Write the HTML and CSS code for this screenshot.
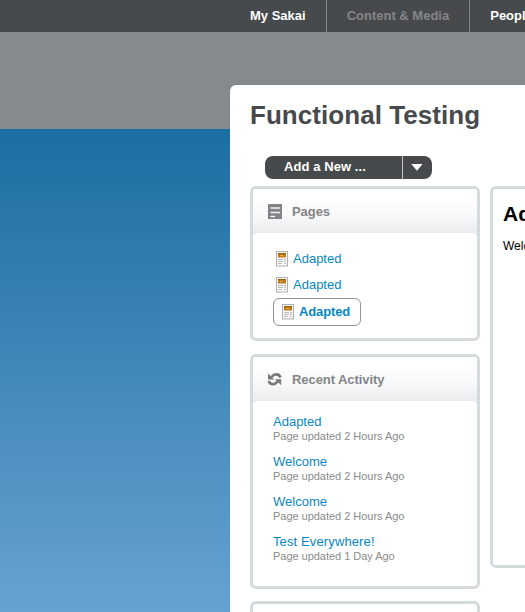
FILE: index.html
```html
<!DOCTYPE html>
<html lang="en">
<head>
<meta charset="utf-8">
<title>Functional Testing</title>
<link rel="stylesheet" href="styles.css">
</head>
<body>
<svg class="defs" aria-hidden="true">
  <symbol id="doc" viewBox="0 0 12 16">
    <rect x=".5" y=".5" width="11" height="14.5" fill="#f8f8f8" stroke="#b0b0b0"/>
    <rect x="2" y="2" width="8" height="4.500" fill="#c07a18"/>
    <path d="M2 2.500h8" stroke="#9a5c08"/>
    <path d="M4 4.500h3" stroke="#dba95c"/>
    <path d="M2 8.5h5M2 10.5h5M2 12.5h4M8 8.5h2M8 10.5h2M8 12.5h2" stroke="#bbb"/>
  </symbol>
</svg>
<nav class="topnav">
  <a class="tab">My Sakai</a>
  <a class="tab muted">Content &amp; Media</a>
  <a class="tab">People</a>
</nav>
<div class="page">
  <main class="panel">
    <h1>Functional Testing</h1>
    <div class="columns">
      <div class="sidebar">
        <div class="add">
          <span class="add-label">Add a New ...</span>
          <span class="add-arrow"><svg width="12" height="7" viewBox="0 0 12 7"><path d="M.3 0h11.200L6 6.800z" fill="#fff"/></svg></span>
        </div>
        <section class="card pages">
          <header>
            <svg width="15" height="15" viewBox="0 0 15 15"><path d="M1 0h14v15H1z" fill="#818387"/><path d="M4 4h8.500M4 8.500h8.500M4 12.500h3.500" stroke="#f3f3f3" stroke-width="1.500" stroke-linecap="round"/></svg>
            <h2>Pages</h2>
          </header>
          <div class="body">
            <a class="item"><svg><use href="#doc"/></svg>Adapted</a>
            <a class="item"><svg><use href="#doc"/></svg>Adapted</a>
            <a class="item selected"><svg><use href="#doc"/></svg>Adapted</a>
          </div>
        </section>
        <section class="card activity">
          <header>
            <svg width="15" height="15" viewBox="0 0 15 15"><g fill="none" stroke="#77797b" stroke-width="2.600"><path d="M13.500 5.500C12 1.600 7.500 1.200 4.500 5"/><path d="M1.700 9C3.200 13 7.800 13.400 10.600 9.600"/></g><path d="M1 1.500v6h6.300zM14.200 13.200V7.200H7.900z" fill="#77797b"/></svg>
            <h2>Recent Activity</h2>
          </header>
          <div class="body">
            <div class="entry"><a>Adapted</a><p>Page updated 2 Hours Ago</p></div>
            <div class="entry"><a>Welcome</a><p>Page updated 2 Hours Ago</p></div>
            <div class="entry"><a>Welcome</a><p>Page updated 2 Hours Ago</p></div>
            <div class="entry"><a class="wide">Test Everywhere!</a><p>Page updated 1 Day Ago</p></div>
          </div>
        </section>
        <section class="card next"></section>
      </div>
      <article class="card content">
        <h3>Adapted</h3>
        <p>Welcome</p>
      </article>
    </div>
  </main>
</div>
</body>
</html>
```

FILE: styles.css
```css
* { box-sizing: border-box; }
body {
  margin: 0;
  height: 612px;
  overflow: hidden;
  font: 13px/16px "Liberation Sans", Arial, sans-serif;
  white-space: nowrap;
}
h1, h2, h3, p { margin: 0; }
.defs { display: none; }
.topnav {
  display: flex;
  height: 32px;
  padding-left: 230px;
  background: #464a4d;
}
.tab {
  flex: none;
  height: 32px;
  padding: 8px 20px;
  color: #fff;
  font-weight: bold;
}
.tab + .tab { border-left: 1px solid #85888a; }
.tab.muted { color: #858687; }
.page {
  height: 580px;
  padding: 53px 0 0 230px;
  background:
    linear-gradient(#868a8d, #868a8d) 0 0 / 100% 97px no-repeat,
    linear-gradient(#1c6ea3, #66a2d1) 0 97px / 100% 483px no-repeat;
}
.panel {
  height: 527px;
  padding: 14px 0 0 20px;
  overflow: hidden;
  background: #fff;
  border-radius: 6px 0 0 0;
}
h1 {
  height: 57px;
  color: #464a4d;
  font-size: 26px;
  line-height: 32px;
  letter-spacing: 0.05px;
}
.columns { display: flex; gap: 10px; }
.sidebar { flex: none; width: 230px; }
.add {
  display: flex;
  width: 167px;
  height: 23px;
  margin: 0 0 7px 15px;
  background: #464a4d;
  border-radius: 8px;
  color: #fff;
  font-weight: bold;
  line-height: 22px;
  letter-spacing: 0.08px;
}
.add-label { width: 137px; padding-left: 19px; }
.add-arrow {
  display: flex;
  flex: 1;
  align-items: center;
  justify-content: center;
  padding-right: 2px;
  border-left: 1px solid #c5c8ca;
}
.card {
  border: 3px solid #d5dadd;
  border-radius: 6px;
  background: #fff;
}
.pages { height: 155px; margin-bottom: 13px; }
.activity { height: 235px; margin-bottom: 12px; }
.next { height: 60px; }
.card header {
  display: flex;
  align-items: center;
  gap: 10px;
  height: 48px;
  padding: 0 0 3px 14px;
  background: linear-gradient(#fff 20%, #f6f7f8 60%, #e9ebed 92%);
  border-radius: 3px 3px 0 0;
}
h2 { color: #828587; font-size: 13px; letter-spacing: -0.07px; }
.body {
  margin-top: -4px;
  padding-left: 20px;
  background: #fff;
  border-radius: 5px 5px 0 0;
}
.pages .body { padding-top: 13px; }
.activity .body { padding-top: 13px; }
.body a { color: #0787bf; }
.item {
  display: flex;
  align-items: center;
  gap: 5px;
  height: 26px;
  padding-left: 3px;
}
.item svg { width: 12px; height: 16px; }
.item.selected {
  width: 88px;
  height: 28px;
  padding-left: 8px;
  border: 1px solid #929496;
  border-radius: 6px;
  font-weight: bold;
  letter-spacing: -0.12px;
}
.entry { height: 40px; }
.entry a { display: block; height: 16px; }
.entry .wide { letter-spacing: 0.12px; }
.entry p {
  color: #8b8b8b;
  font-size: 11px;
  line-height: 13px;
  letter-spacing: -0.03px;
}
.content {
  flex: none;
  width: 500px;
  height: 382px;
  margin-top: 30px;
  padding: 13px 10px;
}
h3 { margin-bottom: 13px; font-size: 21px; line-height: 24px; }
.content p { font-size: 12px; line-height: 14px; }
```
